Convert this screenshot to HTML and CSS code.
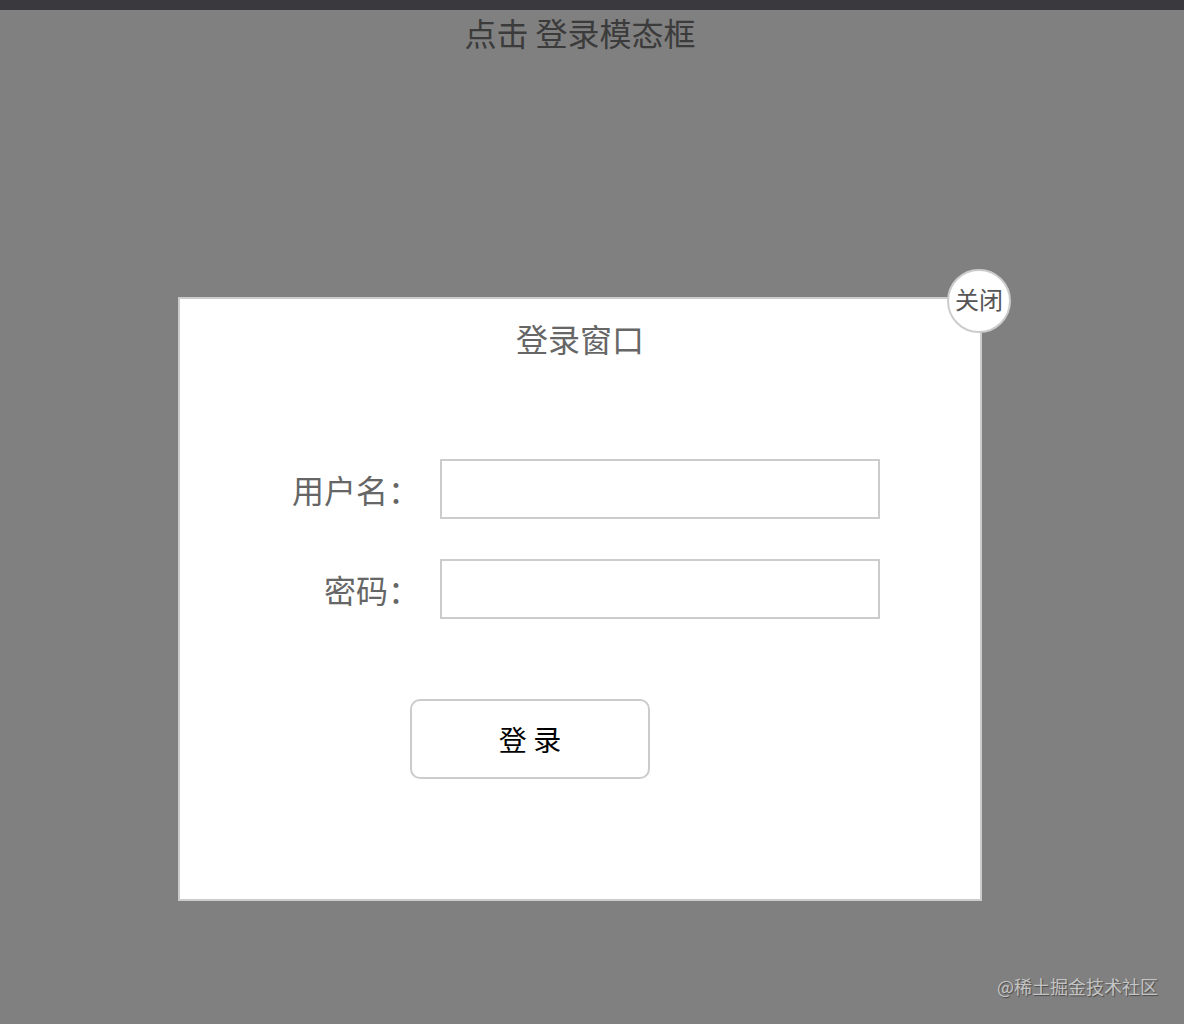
FILE: index.html
```html
<!DOCTYPE html>
<html lang="zh-CN">
<head>
<meta charset="utf-8">
<title>登录模态框</title>
<link rel="stylesheet" href="styles.css">
</head>
<body>
<div class="topbar"></div>
<div class="page">
  <h1 class="page-title">点击 登录模态框</h1>
  <div class="modal">
    <div class="close">关闭</div>
    <div class="modal-title">登录窗口</div>
    <div class="form">
      <div class="row">
        <label class="label">用户名：</label>
        <input class="input" type="text">
      </div>
      <div class="row row-second">
        <label class="label">密码：</label>
        <input class="input" type="password">
      </div>
      <button class="btn">登 录</button>
    </div>
  </div>
</div>
<div class="watermark">@稀土掘金技术社区</div>
</body>
</html>
```
FILE: styles.css
```css
html, body {
  margin: 0;
  padding: 0;
}
body {
  background: #808080;
  font-family: "Noto Sans CJK SC", "Noto Sans", sans-serif;
  height: 1024px;
  overflow: hidden;
  position: relative;
}
.topbar {
  height: 10px;
  background: #3a3a3e;
}
.page {
  width: 1160px;
}
.page-title {
  margin: 0;
  font-size: 32px;
  line-height: 44px;
  font-weight: 400;
  text-align: center;
  color: #3b3b3b;
}
.modal {
  position: relative;
  box-sizing: border-box;
  width: 804px;
  height: 604px;
  margin: 243px auto 0;
  background: #fff;
  border: 2px solid #cccccc;
}
.close {
  position: absolute;
  top: -30px;
  right: -31px;
  box-sizing: border-box;
  width: 64px;
  height: 64px;
  padding-bottom: 5px;
  border: 2px solid #cccccc;
  border-radius: 50%;
  background: #fff;
  color: #555;
  font-size: 24px;
  line-height: 30px;
  display: flex;
  align-items: center;
  justify-content: center;
}
.modal-title {
  margin-top: 17px;
  font-size: 32px;
  line-height: 44px;
  text-align: center;
  color: #666;
}
.form {
  margin-top: 99px;
  display: flex;
  flex-direction: column;
  align-items: flex-start;
}
.row {
  display: flex;
  align-items: center;
  gap: 20px;
}
.row-second {
  margin-top: 40px;
}
.label {
  width: 240px;
  text-align: right;
  font-size: 32px;
  line-height: 40px;
  color: #666;
}
.input {
  box-sizing: border-box;
  width: 440px;
  height: 60px;
  margin: 0;
  border: 2px solid #cccccc;
  background: #fff;
  outline: none;
}
.btn {
  box-sizing: border-box;
  margin: 80px 0 0 230px;
  width: 240px;
  height: 80px;
  border: 2px solid #cccccc;
  border-radius: 10px;
  background: #fff;
  color: #000;
  font-family: "Noto Sans CJK SC", sans-serif;
  font-size: 28px;
  padding: 0;
}
.watermark {
  position: absolute;
  right: 26px;
  bottom: 26px;
  font-size: 18px;
  line-height: 24px;
  color: #c4c4c4;
  text-shadow: 1px 1px 1px #4a4a4a;
}
```
